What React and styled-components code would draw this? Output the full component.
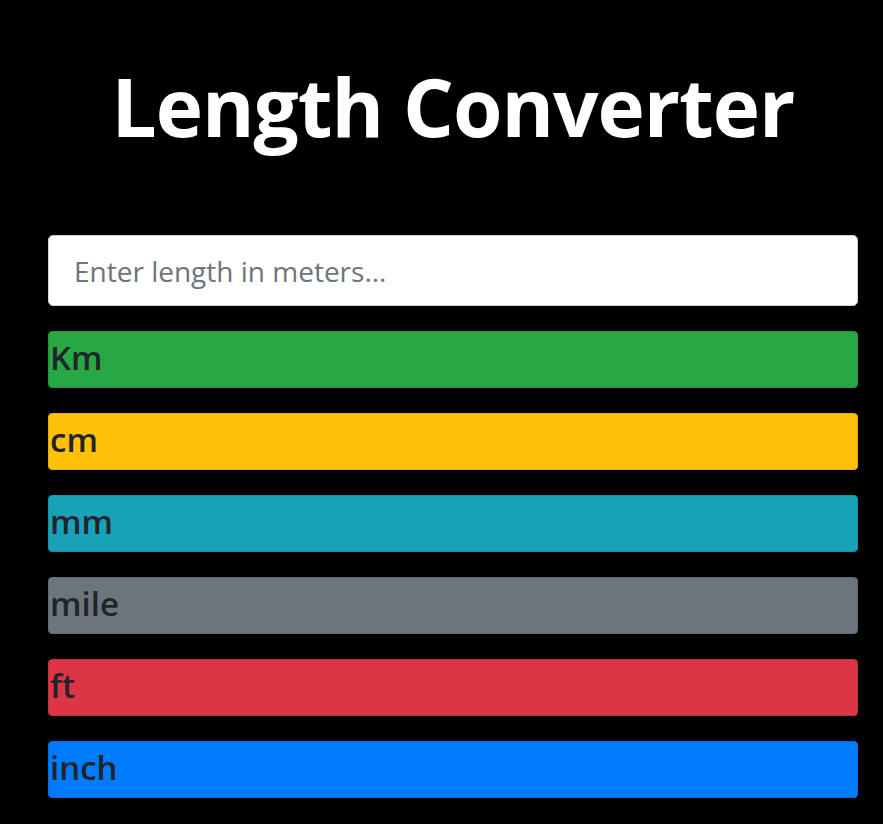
import React from "react";
import styled, { createGlobalStyle } from "styled-components";

const GlobalStyle = createGlobalStyle`
  html, body {
    margin: 0;
    padding: 0;
    background: #000000;
  }
  body {
    font-family: "Open Sans", "Noto Sans", sans-serif;
  }
  * {
    box-sizing: border-box;
  }
`;

const units = [
  { label: "Km", bg: "#28a745", border: "#23963e" },
  { label: "cm", bg: "#ffc107", border: "#e6ad06" },
  { label: "mm", bg: "#17a2b8", border: "#1592a6" },
  { label: "mile", bg: "#6c757d", border: "#616a71" },
  { label: "ft", bg: "#dc3545", border: "#c6303e" },
  { label: "inch", bg: "#007bff", border: "#006fe6" },
];

function App() {
  const [meters, setMeters] = React.useState("");

  return (
    <>
      <GlobalStyle />
      <Page>
        <Title>Length Converter</Title>
        <Input
          type="number"
          value={meters}
          placeholder="Enter length in meters..."
          onChange={(e) => setMeters(e.target.value)}
        />
        <List>
          {units.map((u) => (
            <Result key={u.label} bg={u.bg} border={u.border}>
              {u.label}
            </Result>
          ))}
        </List>
      </Page>
    </>
  );
}

export default App;

const Page = styled.div`
  display: flex;
  flex-direction: column;
  padding: 0 25px 0 48px;
  min-height: 824px;
  background: #000000;
`;

const Title = styled.h1`
  margin: 0;
  padding-top: 56px;
  height: 235px;
  text-align: center;
  color: #ffffff;
  font-size: 80px;
  font-weight: 700;
  line-height: 100px;
  letter-spacing: -1px;
`;

const Input = styled.input`
  width: 100%;
  height: 71px;
  padding: 0 25px;
  border: 1px solid #ced4da;
  border-radius: 5px;
  background: #ffffff;
  color: #495057;
  font-family: "Open Sans", "Noto Sans", sans-serif;
  font-size: 28px;
  outline: none;

  &::placeholder {
    color: #6c757d;
  }
`;

const List = styled.div`
  display: flex;
  flex-direction: column;
  gap: 25px;
  margin-top: 25px;
`;

const Result = styled.div`
  display: flex;
  align-items: center;
  height: 57px;
  padding: 0 1px 4px;
  border: 1px solid ${(p) => p.border};
  border-radius: 4px;
  background: ${(p) => p.bg};
  color: #212529;
  font-size: 33px;
  font-weight: 600;
`;
